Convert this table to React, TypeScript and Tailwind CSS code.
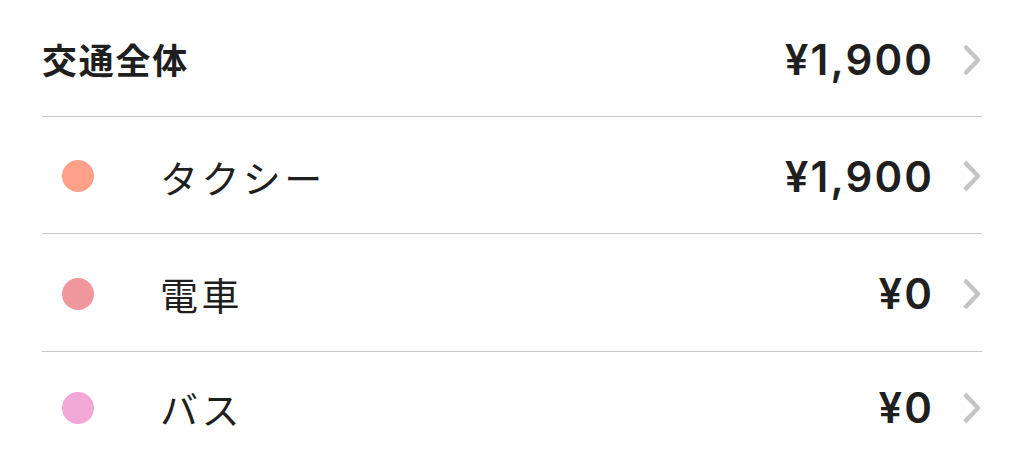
const rows = [
  { name: "タクシー", amount: "¥1,900", dot: "bg-[#ffa08a]", h: "h-[117px]" },
  { name: "電車", amount: "¥0", dot: "bg-[#f0979e]", h: "h-[118px]" },
  { name: "バス", amount: "¥0", dot: "bg-[#f2a8d6]", h: "h-[109px]" },
];

const Chevron = () => (
  <svg width="20" height="32" viewBox="0 0 20 32" className="shrink-0">
    <path d="M4 3.5 L16 16 L4 28.5" fill="none" stroke="#c5c5c8" strokeWidth="4.5" strokeLinecap="round" strokeLinejoin="round" />
  </svg>
);

const App = () => {
  return (
    <div className="w-[1024px] h-[460px] overflow-hidden bg-white px-[42px] text-[#1f1f1f] font-['Noto_Sans_CJK_JP',sans-serif]">
      <div className="h-[117px] pt-[3px] flex items-center border-b border-[#c8c8c8]">
        <h1 className="text-[35px] font-bold flex-1 tracking-[0.05em]">交通全体</h1>
        <span className="text-[42px] font-semibold tracking-[0.05em] font-['Inter','Noto_Sans_CJK_JP',sans-serif] mr-[28px]">¥1,900</span>
        <Chevron />
      </div>
      {rows.map((r, i) => (
        <div
          key={r.name}
          className={`${r.h} pt-[2px] flex items-center ${i < rows.length - 1 ? "border-b border-[#c8c8c8]" : ""}`}
        >
          <span className={`w-8 h-8 rounded-full ml-[20px] ${r.dot}`} />
          <span className="ml-[66px] flex-1 text-[38px] font-normal tracking-[0.09em]">{r.name}</span>
          <span className="text-[42px] font-semibold tracking-[0.05em] font-['Inter','Noto_Sans_CJK_JP',sans-serif] mr-[28px]">{r.amount}</span>
          <Chevron />
        </div>
      ))}
    </div>
  );
};

export default App;
